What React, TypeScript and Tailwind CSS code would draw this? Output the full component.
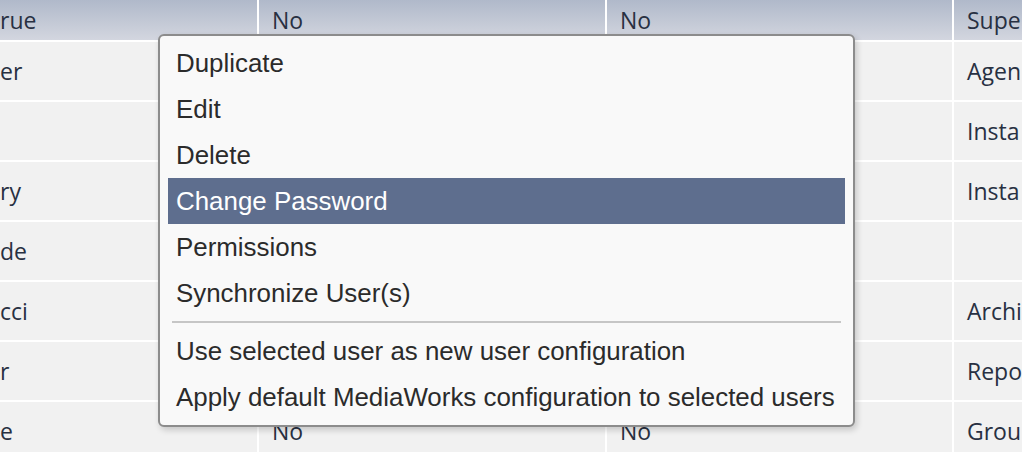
import React from "react";

const rows: [string, string, string, string][] = [
  ["er", "", "", "Agen"],
  ["", "", "", "Insta"],
  ["ry", "", "", "Insta"],
  ["de", "", "", ""],
  ["cci", "", "", "Archi"],
  ["r", "", "", "Repo"],
  ["e", "No", "No", "Grou"],
];

const menu = [
  "Duplicate",
  "Edit",
  "Delete",
  "Change Password",
  "Permissions",
  "Synchronize User(s)",
  "-",
  "Use selected user as new user configuration",
  "Apply default MediaWorks configuration to selected users",
];

export default function App() {
  return (
    <main className="relative h-[452px] w-[1022px] overflow-hidden bg-white">
      <div className="grid grid-cols-[257px_346px_345px_1fr] grid-rows-[40px] auto-rows-[58px] gap-[2px] bg-white font-['Open_Sans',sans-serif] text-[23px] font-medium text-[#283042]">
        {["rue", "No", "No", "Supe"].map((h, i) => (
          <div
            key={i}
            className={`flex items-center bg-gradient-to-b from-[#b0b9ca] to-[#d3d6df] ${i === 0 ? "pl-0" : "pl-[13px]"}`}
          >
            {h}
          </div>
        ))}
        {rows.map((r, ri) =>
          r.map((c, ci) => (
            <div
              key={`${ri}-${ci}`}
              className={`flex items-center bg-[#f1f1f1] ${ci === 0 ? "pl-0" : "pl-[13px]"}`}
            >
              {c}
            </div>
          ))
        )}
      </div>

      <div className="absolute left-[158px] top-[34px] w-[697px] rounded-[6px] border-2 border-[#8c8c8c] bg-[#f9f9f9] pt-[4px] pb-[5px] font-['Liberation_Sans',Arial,sans-serif] text-[25.9px] text-[#2b2b2b] shadow-[2px_3px_6px_rgba(0,0,0,0.18)]">
        {menu.map((m, i) =>
          m === "-" ? (
            <div key={i} className="mx-[12px] my-[5px] h-[2px] bg-[#c6c6c6]" />
          ) : (
            <div
              key={i}
              className={`mx-[8px] flex h-[46px] items-center px-[8px] ${m === "Change Password" ? "bg-[#5e6e8e] text-white" : ""}`}
            >
              {m}
            </div>
          )
        )}
      </div>
    </main>
  );
}
